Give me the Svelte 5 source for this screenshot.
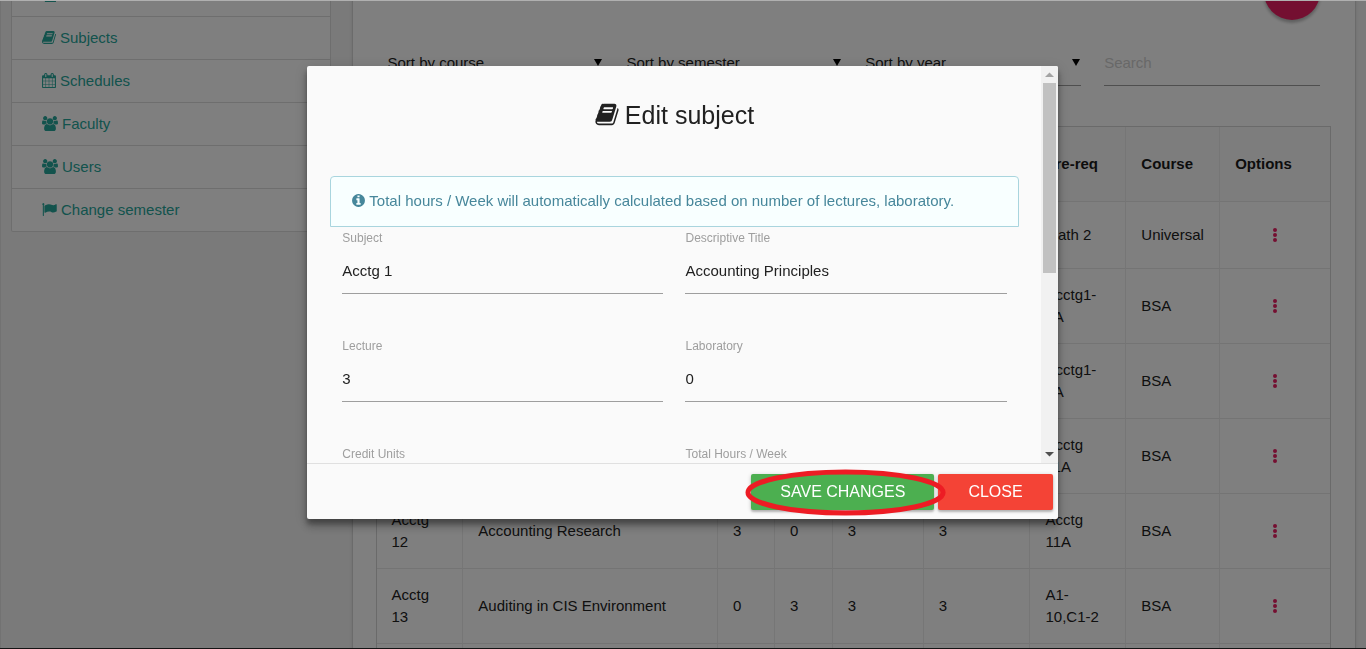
<script>
  const icons = {
    home: { box: '64 0 1664 1792', w: 14, d: 'M400 1000h1328v792h-1328z' },
    book: {
      box: '64 0 1664 1792', w: 14,
      d: 'M1703 478q40 57 18 129l-275 906q-19 64-76.500 107.500t-122.500 43.500h-923q-77 0-148.500-53.500t-99.500-131.500q-24-67-2-127 0-4 3-27t4-37q1-8-3-21.500t-3-19.500q2-11 8-21t16.500-23.500 16.500-23.500q23-38 45-91.500t30-91.500q3-10 .5-30t-.5-28q3-11 17-28t17-23q21-36 42-92t25-90q1-9-2.500-32t.5-28q4-13 22-30.500t22-22.500q19-26 42.500-84.500t27.500-96.500q1-8-3-25.500t-2-26.500q2-8 9-18t18-23 17-21q8-12 16.500-30.500t15-35 16-36 19.500-32 26.500-23.500 36-11.500 47.500 5.500l-1 3q38-9 51-9h761q74 0 114 56t18 130l-274 906q-36 119-71.500 153.500t-128.500 34.500h-869q-27 0-38 15-11 16-1 43 24 70 144 70h923q29 0 56-15.500t35-41.500l300-987q7-22 5-57 38 15 59 43zm-1064 2q-4 13 2 22.500t20 9.500h608q13 0 25.500-9.500t16.500-22.500l21-64q4-13-2-22.500t-20-9.500h-608q-13 0-25.500 9.500t-16.500 22.500zm-83 256q-4 13 2 22.500t20 9.500h608q13 0 25.500-9.500t16.500-22.500l21-64q4-13-2-22.500t-20-9.500h-608q-13 0-25.500 9.500t-16.500 22.500z'
    },
    calendar: {
      box: '64 0 1664 1792', w: 14,
      d: 'M192 1664h288v-288h-288v288zm352 0h320v-288h-320v288zm-352-352h288v-320h-288v320zm352 0h320v-320h-320v320zm-352-384h288v-288h-288v288zm736 736h320v-288h-320v288zm-384-736h320v-288h-320v288zm768 736h288v-288h-288v288zm-384-352h320v-320h-320v320zm-352-864v-288q0-13-9.500-22.500t-22.500-9.500h-64q-13 0-22.500 9.500t-9.500 22.500v288q0 13 9.500 22.500t22.500 9.500h64q13 0 22.500-9.500t9.500-22.500zm736 864h288v-320h-288v320zm-384-384h320v-288h-320v288zm384 0h288v-288h-288v288zm32-480v-288q0-13-9.500-22.500t-22.500-9.500h-64q-13 0-22.500 9.500t-9.500 22.500v288q0 13 9.500 22.500t22.500 9.500h64q13 0 22.500-9.500t9.500-22.500zm384-64v1280q0 52-38 90t-90 38h-1408q-52 0-90-38t-38-90v-1280q0-52 38-90t90-38h128v-96q0-66 47-113t113-47h64q66 0 113 47t47 113v96h384v-96q0-66 47-113t113-47h64q66 0 113 47t47 113v96h128q52 0 90 38t38 90z'
    },
    group: {
      box: '-64 0 1920 1792', w: 16,
      d: 'M529 896q-162 5-265 128h-134q-82 0-138-40.500t-56-118.500q0-353 124-353 6 0 43.500 21t97.500 42.500 119 21.500q67 0 133-23-5 37-5 66 0 139 81 256zm1071 637q0 120-73 189.500t-194 69.500h-874q-121 0-194-69.500t-73-189.500q0-53 3.500-103.500t14-109 26.500-108.500 43-97.500 62-81 85.500-53.500 111.500-20q10 0 43 21.500t73 48 107 48 135 21.500 135-21.500 107-48 73-48 43-21.500q61 0 111.500 20t85.500 53.500 62 81 43 97.500 26.500 108.500 14 109 3.500 103.500zm-1024-1277q0 106-75 181t-181 75-181-75-75-181 75-181 181-75 181 75 75 181zm704 384q0 159-112.500 271.500t-271.500 112.500-271.500-112.500-112.500-271.500 112.500-271.500 271.500-112.500 271.500 112.500 112.500 271.500zm576 225q0 78-56 118.500t-138 40.500h-134q-103-123-265-128 81-117 81-256 0-29-5-66 66 23 133 23 59 0 119-21.500t97.500-42.500 43.500-21q124 0 124 353zm-128-609q0 106-75 181t-181 75-181-75-75-181 75-181 181-75 181 75 75 181z'
    },
    flag: {
      box: '64 0 1728 1792', w: 15,
      d: 'M320 256q0 72-64 110v1266q0 13-9.500 22.500t-22.500 9.500h-64q-13 0-22.500-9.500t-9.500-22.500v-1266q-64-38-64-110 0-53 37.500-90.500t90.500-37.500 90.500 37.500 37.500 90.500zm1472 64v763q0 25-12.500 38.500t-39.500 27.500q-215 116-369 116-61 0-123.500-22t-108.500-48-115.500-48-142.500-22q-192 0-464 146-17 9-33 9-26 0-45-19t-19-45v-742q0-32 31-55 21-14 79-43 236-120 421-120 107 0 200 29t219 88q38 19 88 19 54 0 117.500-21t110-47 88-47 54.500-21q26 0 45 19t19 45z'
    },
    info: {
      box: '128 0 1536 1792', w: 13,
      d: 'M1152 1376v-160q0-14-9-23t-23-9h-96v-512q0-14-9-23t-23-9h-320q-14 0-23 9t-9 23v160q0 14 9 23t23 9h96v320h-96q-14 0-23 9t-9 23v160q0 14 9 23t23 9h448q14 0 23-9t9-23zm-128-896v-160q0-14-9-23t-23-9h-192q-14 0-23 9t-9 23v160q0 14 9 23t23 9h192q14 0 23-9t9-23zm640 416q0 209-103 385.500t-279.500 279.500-385.500 103-385.500-103-279.500-279.500-103-385.500 103-385.500 279.500-279.500 385.500-103 385.500 103 279.500 279.500 103 385.500z'
    }
  };

  const links = [
    ['home', ''],
    ['book', 'Subjects'],
    ['calendar', 'Schedules'],
    ['group', 'Faculty'],
    ['group', 'Users'],
    ['flag', 'Change semester']
  ];

  const sorts = ['Sort by course', 'Sort by semester', 'Sort by year'];

  const columns = [86, 255, 57, 58, 91, 107, 96, 94, 111];
  const total = columns.reduce((a, b) => a + b, 0);
  const heads = ['', '', '', '', '', '', 'Pre-req', 'Course', 'Options'];
  const rows = [
    ['', '', '', '', '', '', 'Math 2', 'Universal'],
    ['', '', '', '', '', '', 'Acctg1-1A', 'BSA'],
    ['', '', '', '', '', '', 'Acctg1-1A', 'BSA'],
    ['', '', '', '', '', '', 'Acctg 11A', 'BSA'],
    ['Acctg 12', 'Accounting Research', '3', '0', '3', '3', 'Acctg 11A', 'BSA'],
    ['Acctg 13', 'Auditing in CIS Environment', '0', '3', '3', '3', 'A1-10,C1-2', 'BSA'],
    ['', '', '', '', '', '', '', '']
  ];

  let fields = $state([
    { id: 'subject', label: 'Subject', value: 'Acctg 1' },
    { id: 'title', label: 'Descriptive Title', value: 'Accounting Principles' },
    { id: 'lecture', label: 'Lecture', value: '3' },
    { id: 'laboratory', label: 'Laboratory', value: '0' },
    { id: 'units', label: 'Credit Units', value: '' },
    { id: 'hours', label: 'Total Hours / Week', value: '' }
  ]);
</script>

{#snippet icon(name)}
  <svg class="icon" viewBox={icons[name].box} width={icons[name].w} height="15" aria-hidden="true">
    <path d={icons[name].d} />
  </svg>
{/snippet}

<div class="page">
  <aside class="side">
    <nav class="menu">
      {#each links as [name, label]}
        <a href="#menu">{@render icon(name)}<span>{label}</span></a>
      {/each}
    </nav>
  </aside>

  <main class="main">
    <section class="panel">
      <div class="actions"><button class="fab" aria-label="Add subject"></button></div>
      <div class="filters">
        {#each sorts as label}
          <div class="filter">
            <select aria-label={label}><option>{label}</option></select>
            <svg class="caret" viewBox="0 0 8 7" width="8" height="7" aria-hidden="true"><path d="M0 0h8L4 7z" /></svg>
          </div>
        {/each}
        <div class="filter"><input type="text" placeholder="Search" aria-label="Search" /></div>
      </div>
      <table>
        <colgroup>
          {#each columns as c}<col style:width={`${(c / total) * 100}%`} />{/each}
        </colgroup>
        <thead>
          <tr>{#each heads as h}<th>{h}</th>{/each}</tr>
        </thead>
        <tbody>
          {#each rows as row}
            <tr>
              {#each row as cell}<td>{cell}</td>{/each}
              <td class="options">
                <button class="more" aria-label="Options">
                  <svg viewBox="0 0 4 14" width="4" height="14"><circle cx="2" cy="2" r="2" /><circle cx="2" cy="7" r="2" /><circle cx="2" cy="12" r="2" /></svg>
                </button>
              </td>
            </tr>
          {/each}
        </tbody>
      </table>
    </section>
  </main>
</div>

<div class="overlay"></div>

<div class="modal" role="dialog" aria-labelledby="modal-title">
  <div class="body">
    <form class="content">
      <h5 id="modal-title">
        <svg class="icon" viewBox={icons.book.box} width="24" height="25" aria-hidden="true"><path d={icons.book.d} /></svg>
        <span>Edit subject</span>
      </h5>
      <div class="notice">
        {@render icon('info')}<span>Total hours / Week will automatically calculated based on number of lectures, laboratory.</span>
      </div>
      <div class="fields">
        {#each fields as f}
          <div class="field">
            <label for={f.id}>{f.label}</label>
            <input id={f.id} type="text" bind:value={f.value} />
          </div>
        {/each}
      </div>
    </form>
    <div class="scrollbar" aria-hidden="true">
      <svg viewBox="0 0 17 17" width="17" height="17"><path d="M4 11h9L8.500 6.500z" fill="#a3a3a3" /></svg>
      <div class="thumb"></div>
      <svg class="down" viewBox="0 0 17 17" width="17" height="17"><path d="M4 6h9L8.500 10.500z" fill="#505050" /></svg>
    </div>
  </div>
  <footer>
    <div class="marked">
      <button class="btn save">SAVE CHANGES</button>
      <svg class="ring" viewBox="0 0 202 46" preserveAspectRatio="none" aria-hidden="true">
        <ellipse cx="101" cy="23" rx="98" ry="20" />
      </svg>
    </div>
    <button class="btn close">CLOSE</button>
  </footer>
</div>

<div class="edge top"></div>
<div class="edge bottom"></div>

<style>
  :global(body) {
    background: #f5f5f5;
    color: #212121;
    font: 15px/22px 'Liberation Sans', Arial, sans-serif;
    overflow: hidden;
  }
  *, *::before, *::after { box-sizing: border-box; }
  button, input, select { font: inherit; color: inherit; }
  .icon { display: block; flex: none; margin-bottom: 2px; fill: currentColor; }

  .page {
    display: grid;
    grid-template-columns: minmax(0, 1fr) minmax(0, 3fr);
    height: 100vh;
    overflow: hidden;
    box-shadow: inset 1px 0 #e4e4e4;
  }
  .side, .main { padding: 0 11px; }

  .menu {
    margin-top: -27px;
    background: #fff;
    border: 1px solid #dcdcdc;
    border-top: 0;
    border-radius: 2px;
  }
  .menu a {
    display: flex;
    align-items: center;
    gap: 4px;
    height: 43px;
    padding-left: 30px;
    border-top: 1px solid #dcdcdc;
    color: #26a69a;
    text-decoration: none;
  }

  .panel {
    margin-top: -60px;
    padding: 24px 24px 24px 23px;
    background: #fff;
    box-shadow: 0 2px 2px rgba(0, 0, 0, 0.14), 0 1px 5px rgba(0, 0, 0, 0.12), 0 0 1px rgba(0, 0, 0, 0.2);
  }
  .actions { display: flex; justify-content: flex-end; padding: 0 11px; }
  .fab {
    width: 56px;
    height: 56px;
    border: 0;
    border-radius: 50%;
    background: #e91e63;
    box-shadow: 0 3px 3px rgba(0, 0, 0, 0.2), 0 1px 5px rgba(0, 0, 0, 0.12);
  }
  .filters {
    display: grid;
    grid-template-columns: repeat(4, minmax(0, 1fr));
    margin: 21px 0 40px;
  }
  .filter { position: relative; padding: 0 11px 0 12px; }
  .filter select, .filter input {
    display: block;
    width: 100%;
    height: 45px;
    padding: 0;
    border: 0;
    border-bottom: 1px solid #9e9e9e;
    border-radius: 0;
    background: none;
    appearance: none;
    outline: 0;
  }
  .filter input { padding-bottom: 2px; }
  .filter input::placeholder { color: #d1d1d1; opacity: 1; }
  .caret { position: absolute; right: 12px; top: 18px; }

  table {
    width: 100%;
    table-layout: fixed;
    border-collapse: separate;
    border-spacing: 0;
    border: 1px solid #d4d4d5;
  }
  th, td {
    height: 75px;
    padding: 15px;
    text-align: left;
    vertical-align: middle;
    border-bottom: 1px solid #e8e8e8;
    border-left: 1px solid #ececec;
  }
  th:first-child, td:first-child { border-left: 0; }
  th { background: #fafafa; font-weight: bold; color: #1b1b1b; }
  tbody tr:first-child td { height: 67px; }
  .options { text-align: center; padding: 0; }
  .more {
    display: inline-flex;
    align-items: center;
    justify-content: center;
    width: 30px;
    height: 30px;
    padding: 0;
    border: 0;
    background: none;
    vertical-align: middle;
  }
  .more svg { fill: #e91e63; }

  .overlay { position: fixed; inset: 0; background: rgba(0, 0, 0, 0.5); }

  .modal {
    position: fixed;
    top: 66px;
    bottom: 130px;
    left: 22.5%;
    width: calc(55% - 1px);
    display: flex;
    flex-direction: column;
    overflow: hidden;
    border-radius: 2px;
    background: #fafafa;
    box-shadow: 0 8px 10px 1px rgba(0, 0, 0, 0.14), 0 3px 14px 2px rgba(0, 0, 0, 0.12), 0 5px 5px rgba(0, 0, 0, 0.3);
  }
  .body { display: flex; flex: 1; min-height: 0; }
  .content { flex: 1; min-width: 0; overflow: hidden; padding: 24px 22px 24px 23px; }
  h5 {
    display: flex;
    align-items: center;
    justify-content: center;
    gap: 6px;
    height: 26px;
    margin: 12px 0 48px;
    font-size: 25px;
    font-weight: normal;
    line-height: 28px;
  }
  .notice {
    display: flex;
    align-items: center;
    gap: 4px;
    padding: 13px 21px 14px;
    border: 1px solid #a9d5de;
    border-radius: 4px 4px 0 0;
    background: #f8ffff;
    color: #47879b;
  }
  .fields { display: grid; grid-template-columns: repeat(2, minmax(0, 1fr)); padding: 0 1px; }
  .field { height: 108px; padding: 3px 11px 0; }
  .field label { display: block; font-size: 12px; line-height: 16px; color: #9e9e9e; }
  .field input {
    display: block;
    width: 100%;
    height: 48px;
    padding: 2px 0 0;
    border: 0;
    border-bottom: 1px solid #9e9e9e;
    background: none;
    outline: 0;
  }
  .scrollbar {
    display: flex;
    flex-direction: column;
    align-items: center;
    width: 17px;
    background: #f1f1f1;
  }
  .scrollbar svg { display: block; flex: none; }
  .thumb { width: 13px; height: 50%; max-height: 190px; background: #c1c1c1; }
  .down { margin-top: auto; }

  footer {
    display: flex;
    justify-content: flex-end;
    gap: 4px;
    height: 56px;
    padding: 10px 5px;
    border-top: 1px solid #e0e0e0;
  }
  .marked { position: relative; }
  .btn {
    height: 36px;
    padding: 0 30px;
    border: 0;
    border-radius: 2px;
    color: #fff;
    font-size: 16px;
    box-shadow: 0 2px 2px rgba(0, 0, 0, 0.18), 0 1px 4px rgba(0, 0, 0, 0.2);
  }
  .save { padding: 0 29px; background: #4caf50; }
  .close { background: #f44336; }
  .ring {
    position: absolute;
    left: -6px;
    top: -5px;
    width: calc(100% + 18px);
    height: 47px;
    pointer-events: none;
  }
  .ring ellipse { fill: none; stroke: #ed1c24; stroke-width: 5; }

  .edge { position: fixed; left: 0; right: 0; height: 1px; }
  .edge.top { top: 0; background: #b0b0b0; }
  .edge.bottom { bottom: 0; background: #141414; }
</style>
